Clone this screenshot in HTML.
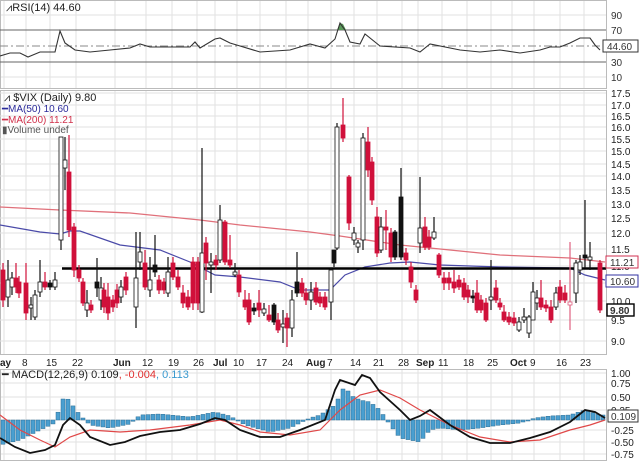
<!DOCTYPE html>
<html><head><meta charset="utf-8"><style>
body{margin:0;background:#fff;width:640px;height:461px;overflow:hidden;font-family:"Liberation Sans",sans-serif}
svg{position:absolute;left:0;top:0}
text{font-family:"Liberation Sans",sans-serif;font-size:10px;fill:#222}
.ax{font-size:10px;fill:#333}
.dt{font-size:10.5px;fill:#222}
</style></head><body>
<svg id="s" width="640" height="461" xmlns="http://www.w3.org/2000/svg">
<rect width="640" height="461" fill="#fff"/>
<g id="grid" stroke="#e2e2e2" stroke-width="1"></g>
<g fill="none" stroke="#bbb" stroke-width="1">
<rect x="0.5" y="0.5" width="606" height="88"/>
<rect x="0.5" y="90.5" width="606" height="264"/>
<rect x="0.5" y="369.5" width="606" height="91"/>
</g>
<!-- RSI -->
<line x1="0" y1="30" x2="606" y2="30" stroke="#666"/>
<line x1="0" y1="62" x2="606" y2="62" stroke="#666"/>
<line x1="0" y1="46" x2="606" y2="46" stroke="#888" stroke-dasharray="8,3,2,3"/>
<polygon points="337,30 340,23 343,24 346,30" fill="#5a9a5a"/>
<polyline id="rsi" fill="none" stroke="#333" stroke-width="1.1"/>
<text x="6" y="11" style="font-size:11px">⩘RSI(14) 44.60</text>
<text class="ax" x="611" y="19">90</text><text class="ax" x="611" y="34">70</text>
<text class="ax" x="611" y="66">30</text><text class="ax" x="611" y="81">10</text>
<rect x="603" y="40" width="35" height="12" fill="#fff" stroke="#333"/>
<text class="ax" x="607" y="50">44.60</text>
<!-- price -->
<g id="pgrid" stroke="#e2e2e2"></g>
<polyline fill="none" stroke="#e0707a" stroke-width="1.3" points="0,207 60,210 130,213 200,220 240,225 310,232 340,236 400,245 500,255 570,258 605,262"/>
<polyline fill="none" stroke="#4a4aa8" stroke-width="1.2" points="0,225 40,232 60,234 70,231 80,231 120,245 160,250 190,262 215,275 240,277 280,282 300,290 330,290 345,275 365,267 390,263 410,262 440,265 500,267 570,268 585,275 605,280"/>
<line x1="62" y1="268.5" x2="606" y2="268.5" stroke="#000" stroke-width="2.5"/>
<g id="candles"></g>
<text x="4" y="101" style="font-size:11px">⩘ $VIX (Daily) 9.80</text>
<text x="2" y="112" style="fill:#2a2a9a;font-size:10px">━MA(50) 10.60</text>
<text x="2" y="123" style="fill:#d0304a;font-size:10px">━MA(200) 11.21</text>
<text x="2" y="133" style="fill:#555;font-size:10px">▮Volume undef</text>
<g class="ax" id="plab"></g>
<rect x="606" y="256" width="32" height="12" fill="#fff" stroke="#d03050"/><text class="ax" x="610" y="266">11.21</text>
<rect x="606" y="275" width="32" height="12" fill="#fff" stroke="#3030a0"/><text class="ax" x="610" y="285">10.60</text>
<rect x="607" y="304" width="27" height="12" fill="#fff" stroke="#000" stroke-width="1.4"/><text class="ax" x="610" y="314" style="font-weight:bold">9.80</text>
<!-- dates -->
<g class="dt" id="dates"></g>
<!-- MACD -->
<g id="hist" fill="#4a9fd0" stroke="#2f6f95" stroke-width="0.5"></g>
<polyline id="sig" fill="none" stroke="#e04848" stroke-width="1.2"/>
<polyline id="macd" fill="none" stroke="#111" stroke-width="1.8"/>
<text x="2" y="378" style="font-size:11px">━ MACD(12,26,9) 0.109<tspan style="fill:#e03030">, -0.004</tspan><tspan style="fill:#3a9ad0">, 0.113</tspan></text>
<g class="ax">
<text x="611" y="377">1.00</text><text x="611" y="387">0.75</text><text x="611" y="401">0.50</text><text x="611" y="414">0.25</text>
<text x="611" y="434">-0.25</text><text x="611" y="446">-0.50</text><text x="611" y="458">-0.75</text></g>
<rect x="608" y="410" width="30" height="12" fill="#fff" stroke="#333"/><text class="ax" x="611" y="420">0.109</text>
</svg>
<script>
var NS="http://www.w3.org/2000/svg";
function el(p,t,a,txt){var e=document.createElementNS(NS,t);for(var k in a)e.setAttribute(k,a[k]);if(txt!=null)e.textContent=txt;p.appendChild(e);return e;}
var dx=[0,22,46,72,113,142,168,193,213,233,256,282,306,327,350,373,398,416,438,463,487,510,530,556,580];
var dl=["ay","8","15","22","Jun","12","19","26","Jul","10","17","24","Aug","7","14","21","28","Sep","11","18","25","Oct","9","16","23"];
var g=document.getElementById("grid"),dg=document.getElementById("dates");
dx.forEach(function(x,i){var xx=x+(dl[i].length>2?2:4);
 el(g,"line",{x1:xx,y1:0,x2:xx,y2:89});el(g,"line",{x1:xx,y1:91,x2:xx,y2:355});el(g,"line",{x1:xx,y1:370,x2:xx,y2:461});
 var b=isNaN(+dl[i]);el(dg,"text",{x:x,y:366,"font-weight":b?"bold":"normal"},dl[i]);});
[15,77].forEach(function(y){el(g,"line",{x1:0,y1:y,x2:606,y2:y});});
var pl=[["17.5",93],["17.0",105],["16.5",116],["16.0",127],["15.5",139],["15.0",151],["14.5",164],["14.0",176],["13.5",190],["13.0",204],["12.5",218],["12.0",233],["11.5",249],["11.0",266],["10.5",283],["10.0",301],["9.5",320],["9.0",341]];
var pg=document.getElementById("pgrid"),lb=document.getElementById("plab");
pl.forEach(function(p){el(pg,"line",{x1:0,y1:p[1],x2:606,y2:p[1]});if(p[0]!="10.5"&&p[0]!="11.0"||p[0]=="11.0")el(lb,"text",{x:611,y:p[1]+4},p[0]);});
[373,383,397,410,420,430,442,454].forEach(function(y){el(g,"line",{x1:0,y1:y,x2:606,y2:y});});
// candles: x,bt,bb,wt,wb,type
var C=[[3,270,300,263,307,'r'],[8,280,297,260,307,'w'],[12,278,287,272,295,'w'],[16,278,287,263,293,'r'],[19,282,293,276,298,'r'],[26,283,313,263,320,'r'],[31,305,308,297,320,'w'],[35,295,317,290,320,'w'],[40,282,292,260,297,'w'],[45,282,287,272,290,'r'],[50,283,287,280,290,'b'],[55,280,287,272,290,'w'],
[61,137,240,137,250,'w'],[65,160,168,137,190,'w'],[69,172,230,135,237,'r'],[74,227,270,223,277,'r'],[79,270,278,265,282,'r'],[83,282,303,278,306,'r'],[87,303,310,290,317,'w'],[91,305,310,300,313,'r'],[97,282,288,258,297,'b'],[101,288,300,277,310,'w'],[104,290,307,283,313,'r'],[108,297,313,283,320,'r'],[113,300,307,295,312,'r'],[117,290,303,284,308,'r'],[121,287,297,280,303,'w'],[126,277,290,272,295,'r'],
[136,278,307,232,328,'w'],[140,252,262,232,270,'w'],[145,263,287,250,290,'r'],[150,280,290,257,297,'w'],[155,265,272,235,277,'b'],[159,280,290,275,294,'r'],[164,282,290,278,294,'r'],[168,272,293,257,297,'w'],[173,263,277,257,280,'r'],[178,277,287,270,290,'r'],[183,293,303,285,308,'r'],[188,297,307,290,310,'r'],[193,262,303,257,310,'r'],[198,262,303,257,310,'r'],[202,253,312,148,313,'w'],[206,243,263,237,280,'r'],[211,262,265,253,293,'w'],[216,260,265,255,270,'r'],[220,220,260,205,263,'w'],[225,222,262,220,265,'r'],[230,260,265,235,268,'r'],[235,272,275,263,277,'w'],[239,275,292,270,297,'r'],
[245,300,307,290,310,'r'],[249,300,322,293,325,'r'],[254,308,311,303,315,'b'],[259,303,310,290,317,'r'],[264,309,313,303,316,'w'],[269,315,320,305,322,'r'],[274,305,322,303,325,'b'],[278,320,330,313,333,'r'],[283,324,327,310,343,'w'],[287,318,328,313,347,'r'],[292,300,328,290,337,'w'],[297,282,293,252,297,'b'],[302,283,293,278,297,'r'],[306,293,300,288,305,'r'],
[311,292,300,282,310,'w'],[316,288,302,282,305,'r'],[320,297,303,292,307,'r'],[325,297,307,292,310,'r'],[331,270,302,268,320,'w'],[334,250,263,250,267,'b'],[337,127,248,123,250,'w'],[343,125,138,98,142,'r'],[349,177,223,175,230,'r'],[354,233,240,227,245,'w'],[358,243,247,240,253,'w'],[363,138,240,133,250,'w'],[368,142,170,127,177,'r'],[372,162,200,157,205,'r'],[377,217,253,207,257,'r'],[381,227,250,217,253,'w'],[386,227,230,210,250,'r'],[391,233,257,228,262,'r'],[395,232,257,230,260,'b'],[401,197,257,168,260,'b'],[406,253,260,248,265,'r'],[411,267,282,262,288,'r'],[416,290,300,285,303,'r'],[420,228,243,177,253,'w'],[425,227,247,217,250,'r'],[429,237,247,230,250,'r'],[434,232,238,217,240,'w'],[439,255,275,253,278,'r'],[444,278,283,272,290,'r'],[449,278,283,272,290,'r'],[454,282,288,270,293,'r'],[459,280,287,275,290,'r'],[464,283,297,278,300,'r'],[468,290,297,285,303,'r'],[473,296,298,290,303,'b'],[477,293,310,280,313,'r'],[481,300,310,295,313,'r'],[486,303,320,298,322,'r'],[491,297,300,260,310,'w'],[496,288,300,280,303,'r'],[500,303,307,298,310,'r'],[504,312,320,305,322,'r'],[509,317,322,312,325,'r'],[514,318,323,312,326,'r'],[519,322,330,317,332,'w'],[524,317,320,308,323,'w'],[529,317,333,315,338,'w'],[533,292,320,282,320,'w'],[537,298,303,290,310,'w'],[541,298,307,280,310,'r'],[546,305,308,300,312,'r'],[551,307,320,300,323,'r'],[556,293,307,287,310,'w'],[560,287,300,280,303,'r'],[565,293,300,285,303,'r'],[570,302,305,242,330,'p'],[576,263,293,260,303,'w'],[580,262,270,255,275,'w'],[585,255,258,200,268,'b'],[590,257,260,242,270,'w'],[600,263,310,260,313,'r']];
var cg=document.getElementById("candles");
C.forEach(function(c){var col=c[5]=='r'||c[5]=='p'?'#d0103a':'#111';var wc=c[5]=='p'?'#e06080':col;
 el(cg,"line",{x1:c[0],y1:c[3],x2:c[0],y2:c[4],stroke:wc,"stroke-width":1.2});
 var fill=c[5]=='w'?'#fff':(c[5]=='p'?'#fff':col);
 el(cg,"rect",{x:c[0]-2,y:c[1],width:4,height:Math.max(2,c[2]-c[1]),fill:fill,stroke:c[5]=='p'?'#e06080':col,"stroke-width":0.8});});
function pts(a){return a.map(function(p){return p[0]+","+p[1]}).join(" ");}
document.getElementById("rsi").setAttribute("points",pts([[0,56],[10,53],[20,53],[28,57],[40,52],[55,52],[60,31],[65,43],[75,50],[90,52],[110,50],[130,48],[140,44],[150,47],[190,47],[195,42],[200,48],[215,39],[220,38],[230,43],[240,46],[260,52],[290,50],[310,44],[325,48],[335,39],[340,23],[345,30],[350,42],[360,44],[365,34],[375,42],[380,46],[410,48],[420,52],[430,44],[460,50],[480,52],[500,50],[520,53],[540,50],[550,47],[560,47],[570,43],[580,38],[590,38],[595,45],[600,50]]));
var H=[[0,-25],[20,-20],[40,-10],[55,-3],[60,15],[65,25],[70,18],[80,5],[90,-5],[110,-8],[130,-4],[140,5],[160,6],[190,3],[200,5],[215,8],[230,4],[245,-5],[270,-12],[290,-8],[310,2],[320,5],[335,15],[345,35],[350,25],[360,20],[370,18],[380,10],[390,-5],[400,-18],[410,-20],[420,-22],[430,-10],[440,-8],[460,-10],[480,-8],[500,-5],[520,-3],[535,2],[550,4],[570,5],[585,10],[600,5]];
function interp(x){for(var i=0;i<H.length-1;i++){if(x>=H[i][0]&&x<=H[i+1][0]){var t=(x-H[i][0])/(H[i+1][0]-H[i][0]);return H[i][1]+t*(H[i+1][1]-H[i][1]);}}return 5;}
var hg=document.getElementById("hist");
for(var x=1;x<604;x+=5){var v=interp(x+2);if(Math.abs(v)<0.8)v=v<0?-1:1;el(hg,"rect",{x:x,y:v>0?420-v:420,width:4,height:Math.abs(v)});}
document.getElementById("macd").setAttribute("points",pts([[0,438],[15,447],[30,453],[45,450],[55,445],[63,425],[70,418],[80,425],[90,437],[110,445],[125,442],[140,436],[160,432],[180,430],[200,424],[215,418],[225,420],[240,430],[260,437],[280,437],[300,430],[325,420],[335,390],[340,380],[355,385],[362,375],[370,378],[380,392],[400,410],[410,420],[420,416],[430,410],[450,425],[470,437],[490,443],[510,443],[530,438],[550,432],[570,422],[585,410],[595,412],[605,418]]));
document.getElementById("sig").setAttribute("points",pts([[0,415],[20,430],[40,440],[55,447],[70,437],[90,430],[120,432],[150,430],[190,425],[220,420],[240,425],[260,432],[290,435],[320,430],[340,410],[360,395],[380,390],[400,398],[420,410],[450,425],[480,437],[510,442],[540,440],[570,430],[590,425],[605,420]]));
</script>
</body></html>
